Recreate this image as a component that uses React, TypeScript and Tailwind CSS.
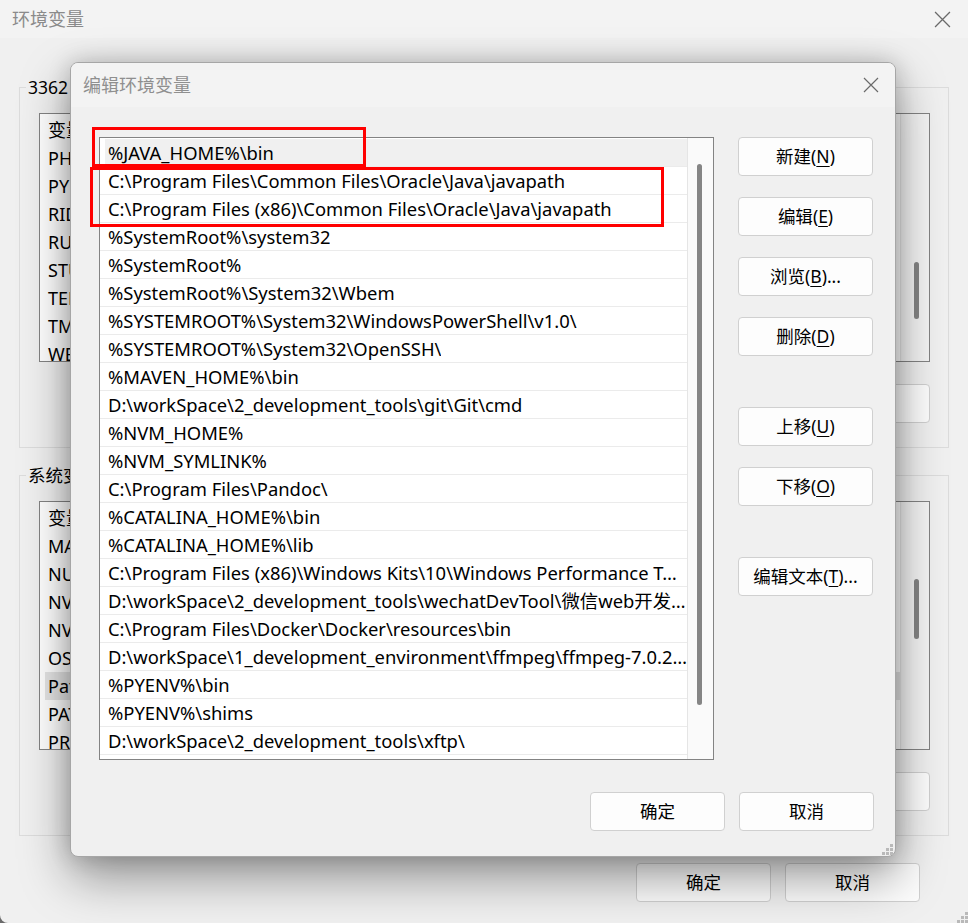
import React from "react";

const F = "font-['Noto_Sans','Noto_Sans_CJK_SC',sans-serif]";

function CloseX({ size = 16, color = "#5c5c5c" }: { size?: number; color?: string }) {
  return (
    <svg width={size} height={size} viewBox="0 0 16 16" fill="none">
      <path d="M1 1L15 15M15 1L1 15" stroke={color} strokeWidth="1.2" />
    </svg>
  );
}

function Grip() {
  const pts = [
    [10, 2],
    [6, 6],
    [10, 6],
    [2, 10],
    [6, 10],
    [10, 10],
  ];
  return (
    <svg width="13" height="13" viewBox="0 0 13 13">
      {pts.map(([x, y], i) => (
        <rect key={i} x={x} y={y} width="3" height="3" fill="#b9b9b9" />
      ))}
    </svg>
  );
}

function Btn({ label, k, tail = "", w = "w-[135px]" }: { label: string; k?: string; tail?: string; w?: string }) {
  return (
    <div
      className={`${w} h-[39px] shrink-0 rounded-[4px] border border-[#d0d0d0] bg-[#fdfdfd] flex items-center justify-center text-[17.5px] text-black ${F}`}
    >
      <span>
        {label}
        {k ? (
          <>
            (<span className="underline underline-offset-[3px] decoration-1">{k}</span>)
          </>
        ) : null}
        {tail}
      </span>
    </div>
  );
}

const paths = [
  "%JAVA_HOME%\\bin",
  "C:\\Program Files\\Common Files\\Oracle\\Java\\javapath",
  "C:\\Program Files (x86)\\Common Files\\Oracle\\Java\\javapath",
  "%SystemRoot%\\system32",
  "%SystemRoot%",
  "%SystemRoot%\\System32\\Wbem",
  "%SYSTEMROOT%\\System32\\WindowsPowerShell\\v1.0\\",
  "%SYSTEMROOT%\\System32\\OpenSSH\\",
  "%MAVEN_HOME%\\bin",
  "D:\\workSpace\\2_development_tools\\git\\Git\\cmd",
  "%NVM_HOME%",
  "%NVM_SYMLINK%",
  "C:\\Program Files\\Pandoc\\",
  "%CATALINA_HOME%\\bin",
  "%CATALINA_HOME%\\lib",
  "C:\\Program Files (x86)\\Windows Kits\\10\\Windows Performance Toolkit\\",
  "D:\\workSpace\\2_development_tools\\wechatDevTool\\微信web开发者工具\\dll",
  "C:\\Program Files\\Docker\\Docker\\resources\\bin",
  "D:\\workSpace\\1_development_environment\\ffmpeg\\ffmpeg-7.0.2-essentials_build\\bin",
  "%PYENV%\\bin",
  "%PYENV%\\shims",
  "D:\\workSpace\\2_development_tools\\xftp\\",
];

const userVars = ["变量", "PHPSTORM_VM_OPTIONS", "PYENV", "RIDER_VM_OPTIONS", "RUBYMINE_VM_OPTIONS", "STUDIO_VM_OPTIONS", "TEMP", "TMP", "WEBSTORM_VM_OPTIONS"];
const sysVars = ["变量", "MAVEN_HOME", "NUMBER_OF_PROCESSORS", "NVM_HOME", "NVM_SYMLINK", "OS", "Path", "PATHEXT", "PROCESSOR_ARCHITECTURE"];

function OuterList({ items, selected, thumbTop, thumbH }: { items: string[]; selected?: number; thumbTop: number; thumbH: number }) {
  return (
    <div className="h-[249px] border border-[#838383] bg-white flex overflow-hidden">
      <div className="flex-1 pt-[2px] pl-[5px]">
        {items.map((t, i) => (
          <div
            key={i}
            className={`h-[28px] flex items-center pl-[3px] text-[18px] text-black whitespace-nowrap ${F} ${i === selected ? "bg-[#e5e5e5]" : ""}`}
          >
            {t}
          </div>
        ))}
      </div>
      <div className="w-[29px] bg-[#f4f4f4] border-l border-[#e6e6e6] flex justify-center">
        <div style={{ marginTop: thumbTop, height: thumbH }} className="w-[5px] rounded-full bg-[#858585] ml-[2px]" />
      </div>
    </div>
  );
}

function GroupBox({ title, items, selected, thumbTop, thumbH, className }: { title: string; items: string[]; selected?: number; thumbTop: number; thumbH: number; className: string }) {
  return (
    <fieldset className={`border border-[#dcdcdc] mx-[19px] pr-[18px] pl-[19px] ${className}`}>
      <legend className={`-ml-[13px] px-[2px] text-[17.5px] leading-[20px] text-black ${F}`}>{title}</legend>
      <div className="mt-[16px]">
        <OuterList items={items} selected={selected} thumbTop={thumbTop} thumbH={thumbH} />
      </div>
      <div className="flex justify-end gap-[14px] mt-[22px] mb-[24px]">
        <Btn label="新建(N)..." />
        <Btn label="编辑(E)..." />
        <Btn label="删除(D)" />
      </div>
    </fieldset>
  );
}

export default function App() {
  return (
    <div className="relative w-[968px] h-[923px] bg-[#6b6b6b] overflow-hidden">
      {/* Outer window */}
      <div className={`w-full h-full bg-[#f0f0f0] rounded-bl-[8px] flex flex-col ${F}`}>
        <div className="h-[38px] bg-[#f3f3f3] flex items-center justify-between pl-[12px] pr-[17px] shrink-0">
          <span className="text-[18px] text-[#8a8a8a]">环境变量</span>
          <CloseX size={17} color="#6a6a6a" />
        </div>
        <GroupBox title="3362 的用户变量(U)" items={userVars} thumbTop={148} thumbH={57} className="mt-[39px]" />
        <GroupBox title="系统变量(S)" items={sysVars} selected={6} thumbTop={77} thumbH={60} className="mt-[17px]" />
        <div className="flex justify-end gap-[14px] pr-[48px] mt-[27px]">
          <Btn label="确定" />
          <Btn label="取消" />
        </div>
        <div className="flex-1 flex items-end justify-end">
          <Grip />
        </div>
      </div>

      {/* Edit dialog */}
      <div className="absolute left-[70px] top-[62px] w-[826px] h-[795px] rounded-[8px] border border-[#a6a6a6] bg-[#f0f0f0] shadow-[0_0_22px_rgba(0,0,0,0.18),0_20px_50px_rgba(0,0,0,0.4)] flex flex-col overflow-hidden">
        <div className="h-[44px] shrink-0 bg-[#f3f3f3] flex items-center justify-between pl-[12px] pr-[16px]">
          <span className={`text-[18px] text-[#8f8f8f] ${F}`}>编辑环境变量</span>
          <CloseX size={16} color="#6a6a6a" />
        </div>
        <div className="flex pl-[28px] pt-[30px]">
          <div className="w-[615px] h-[623px] border border-[#838383] bg-white flex">
            <div className="w-[587px] pt-[1px]">
              {paths.map((p, i) => (
                <div key={i} className="h-[28px] border-b border-[#ebebeb]">
                  <div
                    className={`h-full ml-[5px] pl-[3px] flex items-center text-[18.4px] text-black whitespace-nowrap overflow-hidden ${F} ${i === 0 ? "bg-[#f0f0f0]" : ""}`}
                  >
                    <span className="block overflow-hidden text-ellipsis">{p}</span>
                  </div>
                </div>
              ))}
            </div>
            <div className="flex-1 bg-[#fafafa] border-l border-[#e5e5e5] flex justify-center">
              <div className="mt-[26px] w-[5px] h-[541px] rounded-full bg-[#858585] -ml-[2px]" />
            </div>
          </div>
          <div className="ml-[24px] flex flex-col">
            <Btn label="新建" k="N" />
            <div className="h-[21px]" />
            <Btn label="编辑" k="E" />
            <div className="h-[21px]" />
            <Btn label="浏览" k="B" tail="..." />
            <div className="h-[21px]" />
            <Btn label="删除" k="D" />
            <div className="h-[51px]" />
            <Btn label="上移" k="U" />
            <div className="h-[21px]" />
            <Btn label="下移" k="O" />
            <div className="h-[51px]" />
            <Btn label="编辑文本" k="T" tail="..." />
          </div>
        </div>
        <div className="flex justify-end gap-[14px] pr-[21px] mt-[32px]">
          <Btn label="确定" />
          <Btn label="取消" />
        </div>
        <div className="flex-1 flex items-end justify-end pr-[2px] pb-[1px]">
          <Grip />
        </div>
      </div>

      {/* Red annotation boxes */}
      <div className="absolute left-[92px] top-[127px] w-[274px] h-[40px] border-[3px] border-[#ff0000]" />
      <div className="absolute left-[90px] top-[167px] w-[574px] h-[60px] border-[3px] border-[#ff0000]" />
    </div>
  );
}
